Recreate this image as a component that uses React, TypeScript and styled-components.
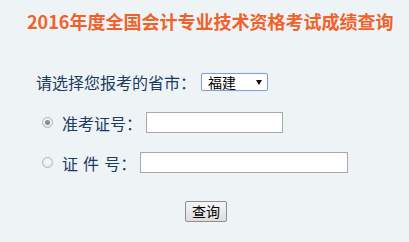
import React from "react";
import styled, { createGlobalStyle } from "styled-components";

const Global = createGlobalStyle`
  html, body { margin: 0; padding: 0; background: #eef3f6; }
  body { font-family: "Noto Sans CJK SC", "Noto Sans", sans-serif; }
`;

const Page = styled.div`
  width: 409px;
  height: 242px;
  background: #eef3f6;
  overflow: hidden;
`;

const Title = styled.h1`
  margin: 0;
  padding-left: 27px;
  height: 43px;
  line-height: 43px;
  font-size: 18px;
  font-weight: bold;
  color: #f0622a;
  white-space: nowrap;
  letter-spacing: 0;
`;

const Form = styled.form`
  margin: 28px 0 0 0;
  display: flex;
  flex-direction: column;
`;

const Row = styled.div<{ $indent: number; $top: number; $h: number }>`
  display: flex;
  align-items: center;
  padding-left: ${(p) => p.$indent}px;
  margin-top: ${(p) => p.$top}px;
  height: ${(p) => p.$h}px;
`;

const Label = styled.label<{ $gap?: number }>`
  font-size: 16px;
  color: #1f3a5e;
  white-space: pre;
  font-family: "DejaVu Sans", "Noto Sans CJK SC", sans-serif;
  margin-right: ${(p) => p.$gap ?? 4}px;
`;

const SelectBox = styled.div`
  box-sizing: border-box;
  width: 67px;
  height: 18px;
  border: 1px solid #7f9fd6;
  border-radius: 2px;
  background: #fff;
  display: flex;
  align-items: center;
  justify-content: space-between;
  padding: 0 5px 0 6px;
  font-size: 14px;
  color: #000;
  box-shadow: 0 0 1px #b9cdee;
`;

const Arrow = styled.span`
  width: 0;
  height: 0;
  border-left: 3px solid transparent;
  border-right: 3px solid transparent;
  border-top: 5px solid #111;
`;

const Radio = styled.span<{ $checked?: boolean }>`
  box-sizing: border-box;
  width: 11px;
  height: 11px;
  border-radius: 50%;
  border: 1px solid #b4b4b4;
  background: radial-gradient(circle at 50% 40%, #fafafa, #e2e2e2);
  display: flex;
  align-items: center;
  justify-content: center;
  margin-right: 9px;
  &::after {
    content: "";
    display: ${(p) => (p.$checked ? "block" : "none")};
    width: 5px;
    height: 5px;
    border-radius: 50%;
    background: #8c8c8c;
  }
`;

const TextInput = styled.input<{ $w: number }>`
  box-sizing: border-box;
  width: ${(p) => p.$w}px;
  height: 21px;
  border: 1px solid #a9a9a9;
  background: #fff;
  margin: 0;
  padding: 0 3px;
  outline: none;
`;

const Button = styled.button`
  box-sizing: border-box;
  width: 42px;
  height: 21px;
  margin: 0;
  padding: 0;
  border: 1px solid #8e8e8e;
  border-radius: 2px;
  background: linear-gradient(#f6f6f6, #dddddd);
  font-family: "Noto Sans CJK SC", sans-serif;
  font-size: 14px;
  line-height: 19px;
  color: #000;
`;

export default function App() {
  return (
    <Page>
      <Global />
      <Title>2016年度全国会计专业技术资格考试成绩查询</Title>
      <Form onSubmit={(e) => e.preventDefault()}>
        <Row $indent={36} $top={0} $h={22}>
          <Label $gap={5}>请选择您报考的省市：</Label>
          <SelectBox>
            <span>福建</span>
            <Arrow />
          </SelectBox>
        </Row>
        <Row $indent={42} $top={19} $h={21}>
          <Radio $checked />
          <Label>准考证号：</Label>
          <TextInput $w={137} />
        </Row>
        <Row $indent={42} $top={19} $h={21}>
          <Radio />
          <Label>证 件 号：</Label>
          <TextInput $w={208} />
        </Row>
        <Row $indent={185} $top={28} $h={21}>
          <Button type="submit">查询</Button>
        </Row>
      </Form>
    </Page>
  );
}
